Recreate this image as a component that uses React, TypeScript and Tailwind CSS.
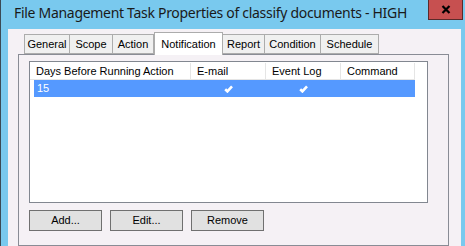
import React from "react";

const Check = () => (
  <svg width="9" height="8" viewBox="0 0 9 8" className="block">
    <path d="M1.2 4.3 L3.4 6.4 L8 1.3" stroke="#ffffff" strokeWidth="2.6" fill="none" strokeLinecap="butt" strokeLinejoin="miter" />
  </svg>
);

const tabs = ["General", "Scope", "Action", "Notification", "Report", "Condition", "Schedule"];
const tabWidths = [45, 43, 41, 68, 42, 56, 58];

export default function App() {
  return (
    <div
      className="relative w-[465px] h-[246px] overflow-hidden bg-[#79c9ee] border-l border-[#3b4a55] flex flex-col"
      style={{ fontFamily: '"Liberation Sans", Arial, sans-serif' }}
    >
      <div className="h-[29px] shrink-0 pl-[13px] pt-[4px] text-[14px] leading-[18px] tracking-[-0.3px] text-[#1a1a1a] whitespace-nowrap" style={{ fontFamily: '"Noto Sans", "Liberation Sans", sans-serif' }}>
        File Management Task Properties of classify documents - HIGH
      </div>
      <div className="absolute right-[2px] top-0 w-[35px] h-[20px] bg-[#c75050] border border-[#5a2a2a] border-t-0 flex items-center justify-center">
        <svg width="10" height="9" viewBox="0 0 10 9">
          <path d="M1.5 1 L8.5 8 M8.5 1 L1.5 8" stroke="#000" strokeWidth="2.2" />
        </svg>
      </div>
      <div className="ml-[7px] mr-[4px] flex-1 bg-[#f5f1f5] pl-[10px] pr-[12px] pt-[2px] flex flex-col">
        <div className="flex items-end pl-[6px] h-[23px] relative z-10">
          {tabs.map((t, i) => {
            const sel = t === "Notification";
            return (
              <div
                key={t}
                className={
                  sel
                    ? "h-[23px] -mb-[1px] bg-white border border-[#acacac] border-b-0 flex items-start justify-center pt-[3px] text-[11px] text-black"
                    : "h-[20px] bg-[#f0f0f0] border border-[#acacac] -ml-[1px] first:ml-0 flex items-center justify-center text-[11px] text-black"
                }
                style={{ width: tabWidths[i] + 1 }}
              >
                {t}
              </div>
            );
          })}
        </div>
        <div className="flex-1 border border-[#898c95] bg-[#f5f1f5] pl-[10px] pt-[6px] flex flex-col">
          <div className="w-[399px] h-[142px] bg-white border border-[#828790] pt-[1px]">
            <div className="flex h-[17px] border-b border-[#e5e5e5] text-[11px] text-black w-[385px]">
              <div className="w-[161px] pl-[6px] border-r border-[#e5e5e5] flex items-center">Days Before Running Action</div>
              <div className="w-[75px] pl-[6px] border-r border-[#e5e5e5] flex items-center">E-mail</div>
              <div className="w-[75px] pl-[6px] border-r border-[#e5e5e5] flex items-center">Event Log</div>
              <div className="w-[74px] pl-[6px] border-r border-[#e5e5e5] flex items-center">Command</div>
            </div>
            <div className="ml-[4px] w-[381px] h-[17px] bg-[#5599ff] flex text-[11px] text-white">
              <div className="w-[157px] pl-[3px] flex items-center">15</div>
              <div className="w-[75px] flex items-center justify-center"><Check /></div>
              <div className="w-[75px] flex items-center justify-center"><Check /></div>
              <div className="w-[74px]"></div>
            </div>
          </div>
          <div className="flex gap-[8px] mt-[7px]">
            {["Add...", "Edit...", "Remove"].map((b) => (
              <div key={b} className="w-[73px] h-[21px] bg-[#e1e1e1] border border-[#707070] flex items-center justify-center text-[11px] text-black">
                {b}
              </div>
            ))}
          </div>
        </div>
      </div>
    </div>
  );
}
